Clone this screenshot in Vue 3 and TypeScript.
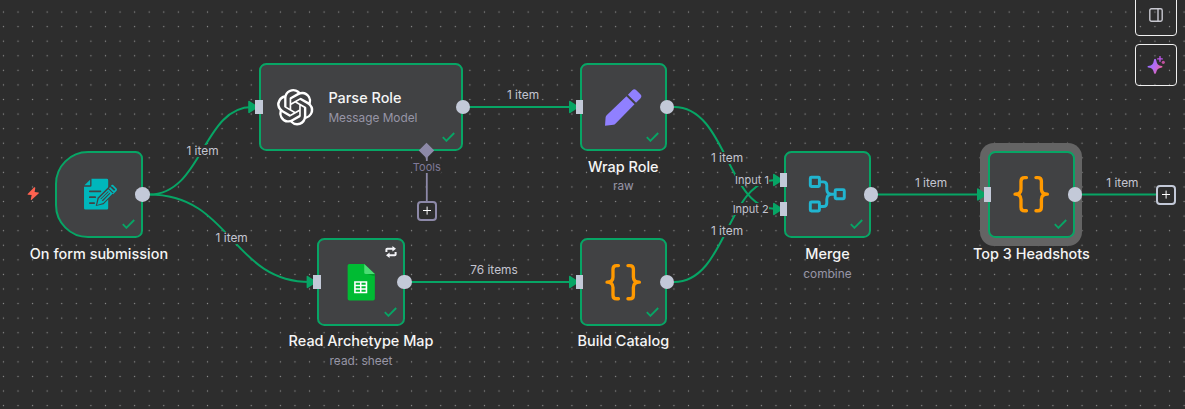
<script setup lang="ts">
interface FlowNode {
  id: string
  title: string
  subtitle?: string
  kind: 'form' | 'openai' | 'sheet' | 'pencil' | 'code' | 'merge'
  x: number
  y: number
  inputs: number[]
  selected?: boolean
  loop?: boolean
}

interface Label {
  text: string
  x: number
  y: number
  cls?: string
}

const nodes: FlowNode[] = [
  { id: 'form', title: 'On form submission', kind: 'form', x: 55.2, y: 150.8, inputs: [] },
  { id: 'parse', title: 'Parse Role', subtitle: 'Message Model', kind: 'openai', x: 259, y: 63.3, inputs: [43.7] },
  { id: 'read', title: 'Read Archetype Map', subtitle: 'read: sheet', kind: 'sheet', x: 317.3, y: 238.2, inputs: [43.7], loop: true },
  { id: 'wrap', title: 'Wrap Role', subtitle: 'raw', kind: 'pencil', x: 579.6, y: 63.3, inputs: [43.7] },
  { id: 'build', title: 'Build Catalog', kind: 'code', x: 579.6, y: 238.2, inputs: [43.7] },
  { id: 'merge', title: 'Merge', subtitle: 'combine', kind: 'merge', x: 783.7, y: 150.8, inputs: [29.1, 58.3] },
  { id: 'top', title: 'Top 3 Headshots', kind: 'code', x: 987.7, y: 150.8, inputs: [43.7], selected: true },
]

const edges: string[] = [
  'M149 194.5 C202.5 194.5 202.5 107 252 107',
  'M149 194.5 C231.5 194.5 231.5 282 310 282',
  'M469 107 H572',
  'M411 282 H572',
  'M674 107 C727 107 727 209 776 209',
  'M674 282 C727 282 727 180 776 180',
  'M877 194.5 H980',
  'M1081 194.5 H1157',
]

const arrows: [number, number][] = [
  [256.6, 107],
  [315, 282],
  [577.4, 107],
  [577.4, 282],
  [781.4, 180],
  [781.4, 209],
  [985.4, 194.5],
]

const labels: Label[] = [
  { text: '1 item', x: 202.5, y: 151.4 },
  { text: '1 item', x: 231.7, y: 238.4 },
  { text: '1 item', x: 523, y: 95.4 },
  { text: '76 items', x: 494, y: 270.4 },
  { text: '1 item', x: 727, y: 158.4 },
  { text: '1 item', x: 727, y: 231.4 },
  { text: '1 item', x: 931, y: 183.4 },
  { text: '1 item', x: 1122.4, y: 183.4 },
  { text: 'Input 1', x: 752, y: 180.2, cls: 'port' },
  { text: 'Input 2', x: 750.7, y: 209.2, cls: 'port' },
  { text: 'Tools', x: 426.8, y: 167.2, cls: 'tools' },
]
</script>

<template>
  <main class="canvas">
    <svg class="layer" width="1185" height="409">
      <defs>
        <pattern id="dots" x="-3.85" y="4.75" width="14.576" height="14.576" patternUnits="userSpaceOnUse">
          <circle cx="7.3" cy="7.3" r="0.68" fill="#8f8f8f" />
        </pattern>
      </defs>
      <rect width="1185" height="409" fill="url(#dots)" />
      <g class="edges">
        <path v-for="d in edges" :key="d" :d="d" />
      </g>
      <path class="tool-line" d="M426.8 151V202" />
    </svg>

    <div class="ring"></div>

    <svg class="layer" width="1185" height="409">
      <path
        v-for="([x, y], i) in arrows"
        :key="i"
        class="arrow"
        :d="`M${x - 7.6} ${y - 5.4} L${x + 0.4} ${y} L${x - 7.6} ${y + 5.4}Z`"
      />
    </svg>

    <section
      v-for="n in nodes"
      :key="n.id"
      class="node"
      :class="[n.kind, { selected: n.selected }]"
      :style="{ left: n.x + 'px', top: n.y + 'px' }"
    >
      <svg v-if="n.kind === 'form'" class="icon" viewBox="0 0 36 36">
        <path fill="#00b7bc" d="M10.4 2.8H25.5Q26.9 2.8 26.9 4.2V32Q26.9 33.2 25.6 33.2H4.4Q3 33.2 3 32V10.7H9Q10.4 10.7 10.4 9.3Z" />
        <path fill="#00b7bc" d="M9 3.6V9.2H3.4Z" />
        <path class="cut" d="M8.8 15.2H19.2M8.8 20.9H14M8.8 26.8H13" />
        <path fill="#414244" d="M14.6 29.6L16.4 21.4L27.6 10.4L33.6 16.6L22.3 28Z" />
        <path fill="#00b7bc" fill-rule="evenodd" d="M15.9 28.6L17.6 22.2L27 13L31.4 17.4L22 26.6ZM19.2 22.6L21.6 25L29 17.4L26.8 15.2Z" />
        <path class="barrel" d="M20 23.8L28.2 15.8" />
        <path class="clip" d="M28.2 11.4L33 16.2M30 9.9L31.2 9.5L34.8 13.1L34.4 14.3L31.2 17.4" />
      </svg>
      <svg v-else-if="n.kind === 'openai'" class="icon" viewBox="0 0 24 24">
        <path fill="#fff" d="M22.2819 9.8211a5.9847 5.9847 0 0 0-.5157-4.9108 6.0462 6.0462 0 0 0-6.5098-2.9A6.0651 6.0651 0 0 0 4.9807 4.1818a5.9847 5.9847 0 0 0-3.9977 2.9 6.0462 6.0462 0 0 0 .7427 7.0966 5.98 5.98 0 0 0 .511 4.9107 6.051 6.051 0 0 0 6.5146 2.9001A5.9847 5.9847 0 0 0 13.2599 24a6.0557 6.0557 0 0 0 5.7718-4.2058 5.9894 5.9894 0 0 0 3.9977-2.9001 6.0557 6.0557 0 0 0-.7475-7.0729zm-9.022 12.6081a4.4755 4.4755 0 0 1-2.8764-1.0408l.1419-.0804 4.7783-2.7582a.7948.7948 0 0 0 .3927-.6813v-6.7369l2.02 1.1686a.071.071 0 0 1 .038.052v5.5826a4.504 4.504 0 0 1-4.4945 4.4944zm-9.6607-4.1254a4.4708 4.4708 0 0 1-.5346-3.0137l.142.0852 4.783 2.7582a.7712.7712 0 0 0 .7806 0l5.8428-3.3685v2.3324a.0804.0804 0 0 1-.0332.0615L9.74 19.9502a4.4992 4.4992 0 0 1-6.1408-1.6464zM2.3408 7.8956a4.485 4.485 0 0 1 2.3655-1.9728V11.6a.7664.7664 0 0 0 .3879.6765l5.8144 3.3543-2.0201 1.1685a.0757.0757 0 0 1-.071 0l-4.8303-2.7865A4.504 4.504 0 0 1 2.3408 7.872zm16.5963 3.8558L13.1038 8.364 15.1192 7.2a.0757.0757 0 0 1 .071 0l4.8303 2.7913a4.4944 4.4944 0 0 1-.6765 8.1042v-5.6772a.79.79 0 0 0-.407-.667zm2.0107-3.0231l-.142-.0852-4.7735-2.7818a.7759.7759 0 0 0-.7854 0L9.409 9.2297V6.8974a.0662.0662 0 0 1 .0284-.0615l4.8303-2.7866a4.4992 4.4992 0 0 1 6.6802 4.66zM8.3065 12.863l-2.02-1.1638a.0804.0804 0 0 1-.038-.0567V6.0742a4.4992 4.4992 0 0 1 7.3757-3.4537l-.142.0805L8.704 5.459a.7948.7948 0 0 0-.3927.6813zm1.0976-2.3654l2.602-1.4998 2.6069 1.4998v2.9994l-2.5974 1.4997-2.6067-1.4997Z" />
      </svg>
      <svg v-else-if="n.kind === 'sheet'" class="icon" viewBox="0 0 36 36">
        <path fill="#0b3" d="M6.3 0H21L31.5 10V34.3Q31.5 36 29.8 36H6.3Q4.6 36 4.6 34.3V1.7Q4.6 0 6.3 0Z" />
        <path fill="#009a2c" d="M22 9.5L31.5 12V10L29 9Z" />
        <path fill="#4bdc74" d="M21 0L31.5 10H22.7Q21 10 21 8.3Z" />
        <path fill="#fff" fill-rule="evenodd" d="M11 17H24V29H11ZM12.6 18.6V20.6H16.8V18.6ZM18.3 18.6V20.6H22.4V18.6ZM12.6 22V24H16.8V22ZM18.3 22V24H22.4V22ZM12.6 25.4V27.4H16.8V25.4ZM18.3 25.4V27.4H22.4V25.4Z" />
      </svg>
      <svg v-else-if="n.kind === 'pencil'" class="icon" viewBox="0 0 36 36">
        <path fill="#9080ff" d="M21.2 7.1L29.2 15.1L10.3 34.3Q9.5 35.1 8.4 35.3L0 36.3L.6 27.9Q.8 26.7 1.6 25.9ZM22.7 5.6L27 1.3Q29 -.7 31 1.3L35 5.3Q37 7.3 35 9.3L30.7 13.6Z" />
      </svg>
      <svg v-else-if="n.kind === 'code'" class="icon" viewBox="0 0 36 36">
        <path class="brace" d="M13.3 1.6H11.5Q7.9 1.6 7.9 5.2V12.8Q7.9 18 2 18Q7.9 18 7.9 23.2V30.8Q7.9 34.4 11.5 34.4H13.3M22.7 1.6H24.5Q28.1 1.6 28.1 5.2V12.8Q28.1 18 34 18Q28.1 18 28.1 23.2V30.8Q28.1 34.4 24.5 34.4H22.7" />
      </svg>
      <svg v-else class="icon" viewBox="0 0 36 36">
        <g class="merge-lines">
          <rect x="1.3" y="1.3" width="9" height="9" rx="1" />
          <rect x="1.3" y="25.7" width="9" height="9" rx="1" />
          <rect x="25.9" y="13.5" width="9" height="9" rx="1" />
          <path d="M10.5 5.8H14Q17.6 5.8 17.6 9.4V13Q17.6 18 22.6 18H25.5M10.5 30.2H14Q17.6 30.2 17.6 26.6V23Q17.6 18 22.6 18" />
        </g>
      </svg>

      <div class="text">
        <strong>{{ n.title }}</strong>
        <span v-if="n.subtitle">{{ n.subtitle }}</span>
      </div>

      <svg v-if="n.loop" class="loop" viewBox="0 0 12 12">
        <path d="M1.4 6V3.6Q1.4 2.8 2.2 2.8H8M10.6 6V8.4Q10.6 9.2 9.8 9.2H4" />
        <path class="tip" d="M7.4 0L11 2.8L7.4 5.6ZM4.6 6.4L1 9.2L4.6 12Z" />
      </svg>
      <svg class="check" viewBox="0 0 13 10"><path d="M.8 5.2L4.4 8.8L12.2 1" /></svg>

      <i v-for="p in n.inputs" :key="p" class="input" :style="{ top: p + 'px' }"></i>
      <i class="output"></i>
    </section>

    <svg class="bolt" viewBox="0 0 12 14"><path d="M7 .3L.3 7.2Q0 7.7.6 7.9L4.4 8.3L3.5 13Q3.6 13.7 4.2 13.3L11.8 6.4Q12.2 5.8 11.4 5.6L7.5 5.2L8.2 .9Q8 0 7 .3Z" /></svg>
    <i class="diamond"></i>
    <span
      v-for="(l, i) in labels"
      :key="i"
      class="label"
      :class="l.cls"
      :style="{ left: l.x + 'px', top: l.y + 'px' }"
    >{{ l.text }}</span>

    <button class="plus tool-plus" aria-label="Add tool"></button>
    <button class="plus end-plus" aria-label="Add node"></button>

    <nav class="actions">
      <button>
        <svg width="14" height="14" viewBox="0 0 14 14" class="panel"><rect x=".8" y=".8" width="12.4" height="12.4" rx="1.6" /><path d="M9 1V13" /></svg>
      </button>
      <button>
        <svg width="18" height="18" viewBox="0 0 18 18">
          <defs>
            <linearGradient id="spark" x1="0" x2="1" y1="0" y2="0.5">
              <stop offset="0.2" stop-color="#9a6cff" />
              <stop offset="0.6" stop-color="#b66cf0" />
              <stop offset="1" stop-color="#e85fa0" />
            </linearGradient>
          </defs>
          <path fill="url(#spark)" d="M7.2 3.3Q8 2.4 8.9 3.3Q9.8 7.4 10.9 8.6Q12 9.6 14.9 10.1Q16 10.8 14.9 11.6Q11.8 12.2 10.9 13.1Q9.8 14.2 8.9 17.3Q8 18.4 7.1 17.3Q6.5 14.2 5.3 13Q4.2 12 1.1 11.6Q0 10.8 1.1 10.1Q4.2 9.6 5.2 8.6Q6.5 7.2 7.2 3.3Z" />
          <path d="M13 .6V5.2M10.7 2.9H15.3" stroke="#bd55e8" stroke-width="1.4" stroke-linecap="round" />
          <circle cx="16.3" cy="6.3" r="1.6" fill="#c0509c" />
        </svg>
      </button>
    </nav>
  </main>
</template>

<style>
body {
  margin: 0;
  background: #2d2e2e;
}
</style>

<style scoped>
.canvas {
  position: relative;
  width: 1185px;
  height: 409px;
  overflow: hidden;
  background: #2d2d2d;
  font-family: Inter, "Liberation Sans", sans-serif;
}
.layer {
  position: absolute;
  inset: 0;
}
.edges path {
  fill: none;
  stroke: #07a565;
  stroke-width: 2;
}
.tool-line {
  stroke: #8d89a8;
  stroke-width: 1.8;
}
.arrow {
  fill: #07a565;
  stroke: #07a565;
  stroke-width: 1.6;
  stroke-linejoin: round;
}
.ring {
  position: absolute;
  left: 980.2px;
  top: 143.4px;
  width: 102px;
  height: 102.4px;
  border-radius: 14px;
  background: #646464;
}
.node {
  position: absolute;
  box-sizing: border-box;
  width: 87.5px;
  height: 87.5px;
  border: 2px solid #07a565;
  border-radius: 7.3px;
  background: #414244;
  display: flex;
  align-items: center;
  justify-content: center;
}
.node.form {
  border-radius: 33px 7.3px 7.3px 33px;
}
.node.openai {
  width: 204px;
  justify-content: flex-start;
  padding-left: 16px;
  gap: 15px;
}
.icon {
  width: 36.4px;
  height: 36.4px;
  overflow: visible;
  flex: none;
}
.cut {
  stroke: #414244;
  stroke-width: 1.8;
  stroke-linecap: round;
}
.barrel {
  stroke: #00b7bc;
  stroke-width: 1.2;
}
.clip {
  fill: none;
  stroke: #00b7bc;
  stroke-width: 1.7;
  stroke-linejoin: round;
}
.brace {
  fill: none;
  stroke: #ff9900;
  stroke-width: 3.3;
  stroke-linecap: round;
  stroke-linejoin: round;
}
.merge-lines {
  fill: none;
  stroke: #21b5d0;
  stroke-width: 2.9;
}
.text {
  position: absolute;
  top: 91.25px;
  left: 50%;
  transform: translateX(-50%);
  display: flex;
  flex-direction: column;
  align-items: center;
  white-space: nowrap;
}
.text strong {
  font-size: 14.45px;
  line-height: 19px;
  font-weight: 500;
  color: #f5f5f5;
}
.text span {
  margin-top: 2.7px;
  font-size: 11.85px;
  line-height: 16px;
  color: #9795a6;
}
.openai .text {
  position: static;
  transform: translateY(0.4px);
  align-items: flex-start;
}
.openai .text span {
  margin-top: 3.5px;
}
.check {
  position: absolute;
  right: 6px;
  bottom: 7px;
  width: 13px;
  height: 10px;
}
.check path {
  fill: none;
  stroke: #07a565;
  stroke-width: 1.9;
}
.loop {
  position: absolute;
  right: 6.2px;
  top: 5.6px;
  width: 12px;
  height: 12px;
}
.loop path {
  fill: none;
  stroke: #f4f4f8;
  stroke-width: 2;
}
.loop .tip {
  fill: #f4f4f8;
  stroke: none;
}
.input {
  position: absolute;
  left: -6px;
  width: 7.5px;
  height: 14.6px;
  margin-top: -9.3px;
  background: #c3c9d8;
}
.output {
  position: absolute;
  right: -9.3px;
  top: 34.4px;
  width: 14.7px;
  height: 14.7px;
  border-radius: 50%;
  background: #c3c9d8;
}
.bolt {
  position: absolute;
  left: 27px;
  top: 187px;
  width: 12.4px;
  height: 13.6px;
}
.bolt path {
  fill: #ff6250;
}
.diamond {
  position: absolute;
  left: 421.3px;
  top: 145.3px;
  width: 11px;
  height: 11px;
  background: #8d89a8;
  transform: rotate(45deg);
}
.label {
  position: absolute;
  transform: translate(-50%, -50%);
  background: #2d2d2d;
  white-space: nowrap;
  font-size: 11.9px;
  line-height: 12px;
  color: #c3c4d0;
}
.label.port {
  font-size: 11px;
}
.label.tools {
  font-size: 11px;
  color: #7f7a99;
}
.plus {
  position: absolute;
  box-sizing: border-box;
  width: 20px;
  height: 20px;
  padding: 0;
  border: 2px solid #c3c9d8;
  border-radius: 4px;
  background: #2d2d2d;
}
.plus::before,
.plus::after {
  content: "";
  position: absolute;
  left: 4px;
  top: 7.5px;
  width: 8px;
  height: 1.2px;
  background: #fff;
}
.plus::after {
  transform: rotate(90deg);
}
.tool-plus {
  left: 416.6px;
  top: 200.8px;
  border-color: #8d89a8;
}
.end-plus {
  left: 1156px;
  top: 184.5px;
}
.actions {
  position: absolute;
  left: 1135px;
  top: -6px;
  display: flex;
  flex-direction: column;
  gap: 8px;
}
.actions button {
  box-sizing: border-box;
  width: 42px;
  height: 42px;
  padding: 0;
  border: 1px solid #f0f0f0;
  border-radius: 4px;
  background: transparent;
  display: flex;
  align-items: center;
  justify-content: center;
}
.panel {
  fill: none;
  stroke: #c8c8d0;
  stroke-width: 1.4;
}
</style>
